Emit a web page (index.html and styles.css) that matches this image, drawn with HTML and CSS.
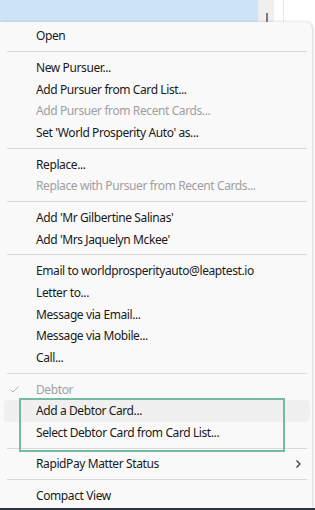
FILE: index.html
```html
<!DOCTYPE html>
<html lang="en">
<head>
  <meta charset="UTF-8">
  <title>Card Context Menu</title>
  <link rel="stylesheet" href="styles.css">
</head>
<body>
  <div class="topbar">
    <div class="selected-row"></div>
    <div class="scroll-col"><span class="thumb"></span></div>
    <div class="blank-col"></div>
  </div>
  <div class="menu">
    <div class="item">Open</div>
    <div class="sep"><span></span></div>
    <div class="item">New Pursuer...</div>
    <div class="item">Add Pursuer from Card List...</div>
    <div class="item disabled">Add Pursuer from Recent Cards...</div>
    <div class="item">Set 'World Prosperity Auto' as...</div>
    <div class="sep"><span></span></div>
    <div class="item">Replace...</div>
    <div class="item disabled">Replace with Pursuer from Recent Cards...</div>
    <div class="sep"><span></span></div>
    <div class="item">Add 'Mr Gilbertine Salinas'</div>
    <div class="item">Add 'Mrs Jaquelyn Mckee'</div>
    <div class="sep"><span></span></div>
    <div class="item">Email to worldprosperityauto@leaptest.io</div>
    <div class="item">Letter to...</div>
    <div class="item">Message via Email...</div>
    <div class="item">Message via Mobile...</div>
    <div class="item">Call...</div>
    <div class="sep"><span></span></div>
    <div class="item disabled checked">
      <svg class="check" width="9" height="7" viewBox="0 0 9 7"><path d="M0.5 3.5 L3 6 L8.5 0.5" fill="none" stroke="#b5b5b5" stroke-width="1"/></svg>
      Debtor
    </div>
    <div class="item hover">Add a Debtor Card...</div>
    <div class="item">Select Debtor Card from Card List...</div>
    <div class="sep"><span></span></div>
    <div class="item submenu">RapidPay Matter Status
      <svg class="chevron" width="5" height="8" viewBox="0 0 5 8"><path d="M0.5 0.5 L4 4 L0.5 7.5" fill="none" stroke="#333" stroke-width="1.2"/></svg>
    </div>
    <div class="sep"><span></span></div>
    <div class="item">Compact View</div>
    <div class="highlight-box"></div>
  </div>
  <div class="bottom-edge"></div>
</body>
</html>
```

FILE: styles.css
```css
body {
  margin: 0;
  width: 315px;
  height: 510px;
  overflow: hidden;
  background: #fff;
  font-family: "Noto Sans", "Open Sans", sans-serif;
  font-size: 12px;
  letter-spacing: -0.4px;
  color: #1a1a1a;
}
.topbar {
  display: flex;
  height: 22px;
}
.selected-row {
  width: 258px;
  background: #cce4f7;
}
.scroll-col {
  width: 16px;
  background: #efefef;
  display: flex;
  align-items: flex-end;
  padding-left: 8px;
  box-sizing: border-box;
}
.thumb {
  width: 2px;
  height: 9px;
  background: #7a7a7a;
}
.blank-col {
  width: 9px;
  border-right: 1px solid #e6e6e6;
}
.menu {
  position: relative;
  width: 312px;
  height: 486px;
  box-sizing: border-box;
  padding: 3px 0 2px;
  background: #f9f9f9;
  border-radius: 0 7px 0 0;
  box-shadow: 1px 0 3px rgba(0, 0, 0, 0.18);
}
.item {
  position: relative;
  height: 21.67px;
  display: flex;
  align-items: center;
  padding-left: 36px;
  white-space: nowrap;
}
.disabled {
  color: #a0a0a0;
}
.check {
  position: absolute;
  left: 10px;
  top: 8px;
}
.hover {
  margin: 0 2px 0 4px;
  padding-left: 32px;
  border-radius: 4px;
  background: #f0f0f0;
}
.chevron {
  position: absolute;
  left: 296px;
  top: 7px;
}
.sep {
  height: 10px;
  display: flex;
  align-items: center;
  padding: 0 5px 0 7px;
}
.sep span {
  flex: 1;
  height: 1px;
  background: #d9d9d9;
}
.highlight-box {
  position: absolute;
  left: 19px;
  top: 376px;
  width: 266px;
  height: 54px;
  box-sizing: border-box;
  border: 2px solid #74bc9f;
}
.bottom-edge {
  height: 2px;
  background: #2b3645;
}
```
